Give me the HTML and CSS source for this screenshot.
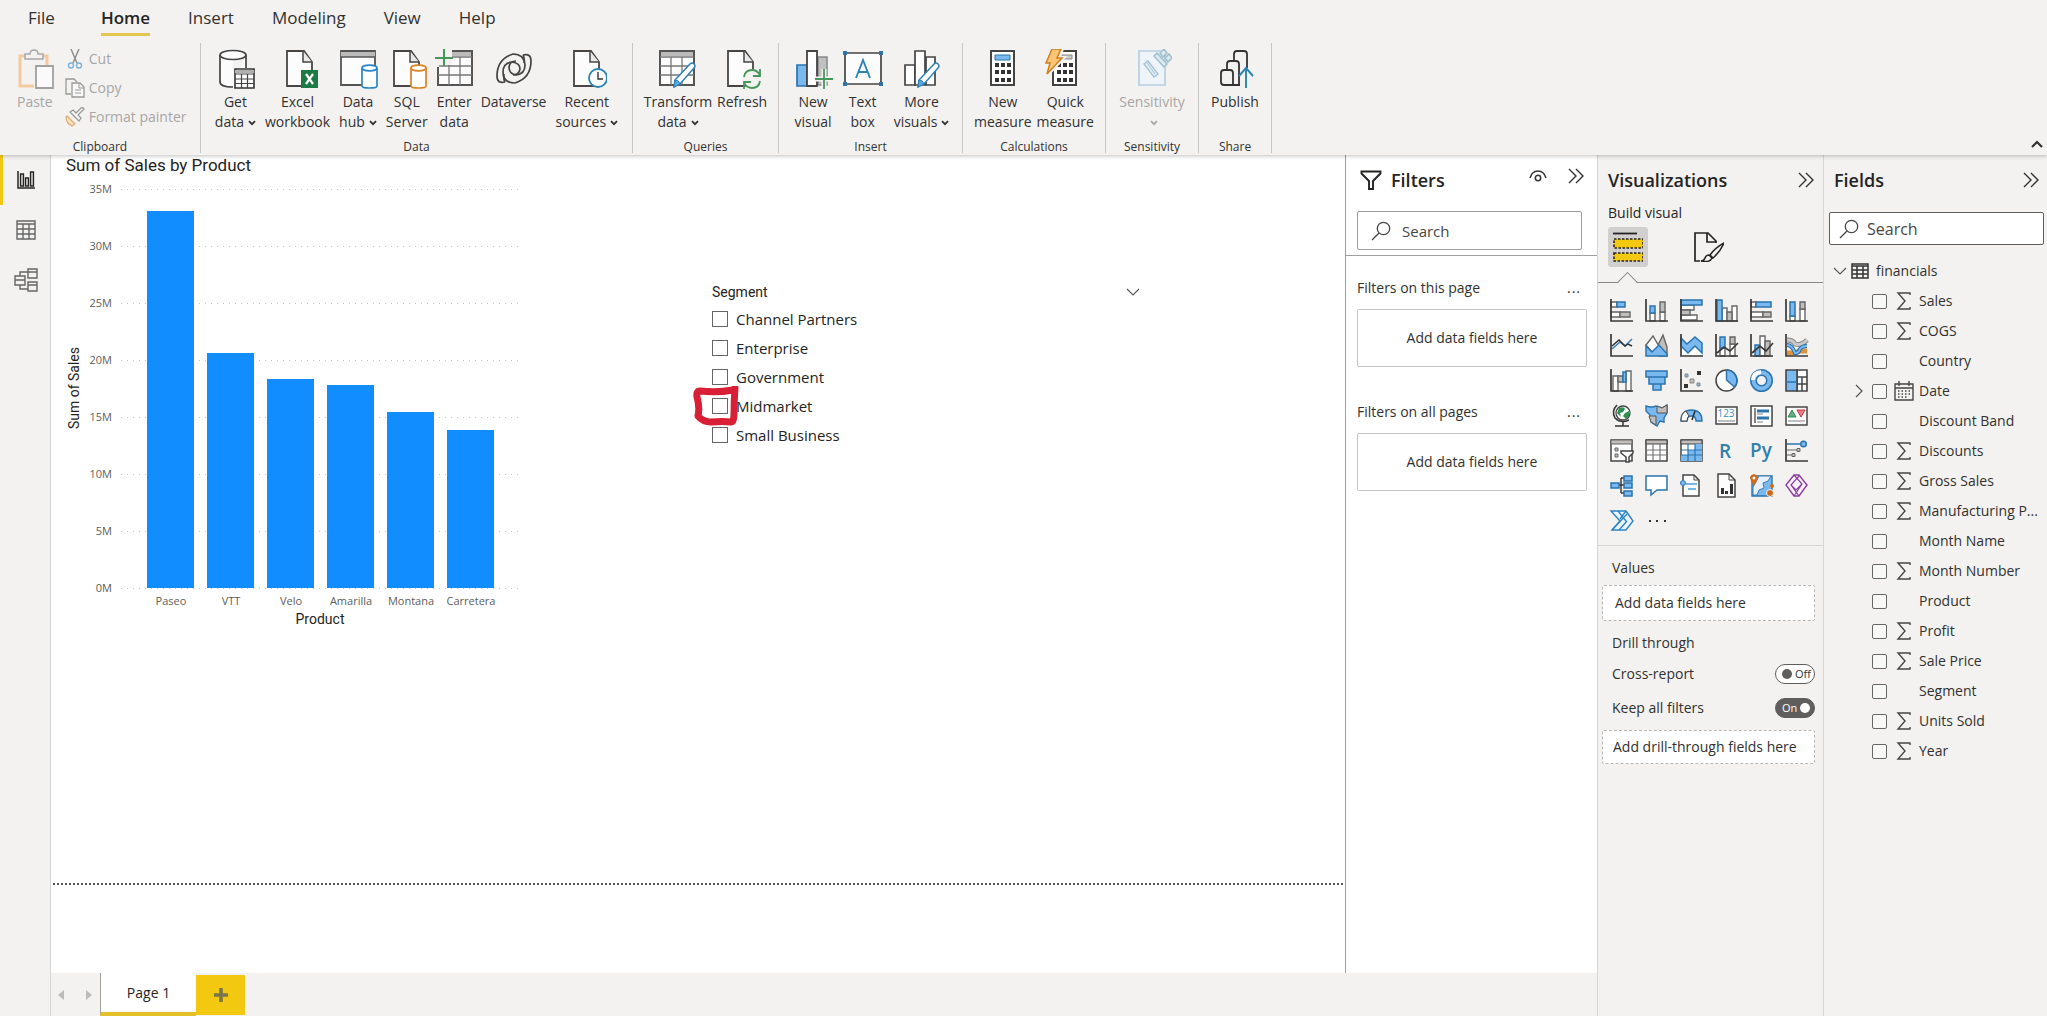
FILE: index.html
```html
<!DOCTYPE html>
<html lang="en">
<head>
    <meta charset="UTF-8">
    <meta name="viewport" content="width=device-width, initial-scale=1">
    <title>Report</title>
    <link rel="stylesheet" href="styles.css">
</head>
<body>
<svg class="defs" aria-hidden="true">
    <symbol id="i-caret" viewBox="0 0 8 6"><path d="M1 1.2l3 3 3-3" fill="none" stroke="currentColor" stroke-width="1.8"/></symbol>
    <symbol id="i-page" viewBox="0 0 28 38"><path d="M1 1h17l8 11v24H1z" fill="#fcfcfc" stroke="#484644" stroke-width="1.8"/><path d="M17 1v11h9" fill="#e8e8e8" stroke="#484644" stroke-width="1.5"/></symbol>
    <symbol id="i-dbl" viewBox="0 0 16 16"><path d="M1 1l7 7-7 7M8 1l7 7-7 7" fill="none" stroke="#333" stroke-width="1.4"/></symbol>
    <symbol id="i-search" viewBox="0 0 20 20"><circle cx="12.5" cy="7.5" r="6.2" fill="none" stroke="#444" stroke-width="1.3"/><path d="M8 12l-7 7" fill="none" stroke="#444" stroke-width="1.3"/></symbol>
    <symbol id="i-sum" viewBox="0 0 14 18"><path d="M13 3V1H1l7 8-7 8h12v-2" fill="none" stroke="#484644" stroke-width="1.4"/></symbol>
    <symbol id="i-down" viewBox="0 0 14 8"><path d="M1 1l6 6 6-6" fill="none" stroke="#555" stroke-width="1.1"/></symbol>
    <symbol id="i-pencil" viewBox="0 0 24 28"><path d="M2 26l1-7L18 3q2-2 4 0t0 4L8 23z" fill="#fff" stroke="#2b7fb3" stroke-width="1.5"/><path d="M2 26l1-7q4 0 5 4z" fill="#5aa9e6" stroke="#2b7fb3"/></symbol>
</svg>

<header class="ribbon">
    <nav class="tabs">
        <button class="tab tab-file">File</button>
        <button class="tab tab-active">Home</button>
        <button class="tab">Insert</button>
        <button class="tab">Modeling</button>
        <button class="tab">View</button>
        <button class="tab">Help</button>
    </nav>
    <div class="groups">
        <section class="group group-clipboard">
            <div class="tools">
                <button class="tool" disabled>
                    <svg class="tool-icon" viewBox="0 0 40 40"><path d="M19 37H5V7h27v9" fill="none" stroke="#f3c9a0" stroke-width="3"/><path d="M10 10V5h5q0-4 4-4t4 4h5v5z" fill="#f3f2f1" stroke="#a8a8a8" stroke-width="1.5"/><path d="M21 17h17v22H21z" fill="#fafafa" stroke="#a0a0a0" stroke-width="1.8"/></svg>
                    <span>Paste</span>
                </button>
                <div class="mini-tools">
                    <button class="mini" disabled><svg class="mini-icon" viewBox="0 0 20 20"><path d="M6 0l6 14M14 0L8 14" fill="none" stroke="#8a8a8a" stroke-width="1.4"/><circle cx="6" cy="16.5" r="2.5" fill="none" stroke="#7fb2d8" stroke-width="1.4"/><circle cx="14" cy="16.5" r="2.5" fill="none" stroke="#7fb2d8" stroke-width="1.4"/></svg>Cut</button>
                    <button class="mini" disabled><svg class="mini-icon" viewBox="0 0 20 20"><path d="M6 16H1V1h8l3 3" fill="none" stroke="#999" stroke-width="1.3"/><path d="M7 5h8l4 4v10H7z" fill="#f8f8f8" stroke="#999" stroke-width="1.3"/><path d="M14 5v5h5M10 12h6M10 15h6" fill="none" stroke="#999"/></svg>Copy</button>
                    <button class="mini" disabled><svg class="mini-icon" viewBox="0 0 20 20"><path d="M2 9l8 8-3 2q-6-3-6-9z" fill="#fbe3c8" stroke="#e2a870" stroke-width="1.2"/><path d="M5 5l9 9 2-3-3-3 6-6-2-2-6 6-3-3z" fill="#f8f8f8" stroke="#999" stroke-width="1.3"/></svg>Format painter</button>
                </div>
            </div>
            <div class="caption">Clipboard</div>
        </section>
        <section class="group group-data">
            <div class="tools">
                <button class="tool">
                    <svg class="tool-icon" viewBox="0 0 40 40"><path d="M5 6v28q0 4 13 4V6M31 6v16H18v16" fill="#fcfcfc"/><path d="M5 6v27q0 5 13 5M31 6v13" fill="none" stroke="#444" stroke-width="1.7"/><ellipse cx="18" cy="6" rx="13" ry="4.5" fill="#fcfcfc" stroke="#444" stroke-width="1.7"/><path d="M20 20h19v19H20z" fill="#fff" stroke="#333" stroke-width="1.6"/><path d="M20 21h19v3H20z" fill="#b0b0b0"/><path d="M20 25h19M20 30h19M20 34.5h19M26.5 25v14M32.5 25v14" stroke="#444" stroke-width="1.2"/></svg>
                    <span>Get<br>data<svg class="caret"><use href="#i-caret"/></svg></span>
                </button>
                <button class="tool">
                    <svg class="tool-icon" viewBox="0 0 40 40"><use href="#i-page" x="8" y="1" width="28" height="38"/><path d="M23 21h17v18H23z" fill="#1c7a45"/><path d="M28 25l7 10M35 25l-7 10" stroke="#fff" stroke-width="2.2"/></svg>
                    <span>Excel<br>workbook</span>
                </button>
                <button class="tool">
                    <svg class="tool-icon" viewBox="0 0 40 40"><path d="M3 2h34v34H3z" fill="#fcfcfc" stroke="#555" stroke-width="1.8"/><path d="M3 3h34v5H3z" fill="#bbb"/><path d="M3 8h34" stroke="#555" stroke-width="1.5"/><path d="M24 19v18q0 2 7.5 2t7.5-2V19" fill="#fff" stroke="#2b84c4" stroke-width="1.7"/><ellipse cx="31.5" cy="19" rx="7.5" ry="2.8" fill="#fff" stroke="#2b84c4" stroke-width="1.7"/></svg>
                    <span>Data<br>hub<svg class="caret"><use href="#i-caret"/></svg></span>
                </button>
                <button class="tool">
                    <svg class="tool-icon" viewBox="0 0 40 40"><use href="#i-page" x="6" y="1" width="28" height="38"/><path d="M24 19v18q0 2 7.5 2t7.5-2V19" fill="#fff" stroke="#d98425" stroke-width="1.7"/><ellipse cx="31.5" cy="19" rx="7.5" ry="2.8" fill="#fff" stroke="#d98425" stroke-width="1.7"/></svg>
                    <span>SQL<br>Server</span>
                </button>
                <button class="tool">
                    <svg class="tool-icon" viewBox="0 0 40 40"><path d="M4 2h34v34H4z" fill="#fcfcfc" stroke="#555" stroke-width="2"/><path d="M15 3h22v4H15z" fill="#bbb"/><path d="M4 17h34M4 26h34M15 8v28M26 8v28M14 8h24" stroke="#777" stroke-width="1.3"/><path d="M0 6h5v12H0zM3 0h15v16H3z" fill="#f3f2f1"/><path d="M10 0v17M1 9h18" stroke="#43985a" stroke-width="2"/></svg>
                    <span>Enter<br>data</span>
                </button>
                <button class="tool">
                    <svg class="tool-icon" viewBox="0 0 40 40"><g fill="none" stroke="#444" stroke-width="1.7"><path d="M11 33q-8 2-8-6 0-17 16-22 11 0 12 11 0 9-9 10-7-1-7-8 1-6 7-6"/><path d="M29 6q8-2 8 6 0 17-16 22-12 0-12-11 0-9 9-10 8 1 8 7-1 6-7 6"/><path d="M11 33q-2-4-1-8M29 6q2 4 1 8"/></g></svg>
                    <span>Dataverse</span>
                </button>
                <button class="tool">
                    <svg class="tool-icon" viewBox="0 0 40 40"><use href="#i-page" x="6" y="1" width="28" height="38"/><circle cx="31" cy="29" r="9" fill="#fff" stroke="#2b84b4" stroke-width="1.8"/><path d="M31 23v7h5" fill="none" stroke="#333" stroke-width="1.4"/></svg>
                    <span>Recent<br>sources<svg class="caret"><use href="#i-caret"/></svg></span>
                </button>
            </div>
            <div class="caption">Data</div>
        </section>
        <section class="group group-queries">
            <div class="tools">
                <button class="tool">
                    <svg class="tool-icon" viewBox="0 0 40 40"><path d="M2 2h34v34H2z" fill="#fcfcfc" stroke="#555" stroke-width="2"/><path d="M3 3h32v4H3z" fill="#bbb"/><path d="M2 8h34M2 17h34M2 26h34M13 8v28M24 8v28" stroke="#777" stroke-width="1.3"/><use href="#i-pencil" x="13" y="12" width="26" height="28"/></svg>
                    <span>Transform<br>data<svg class="caret"><use href="#i-caret"/></svg></span>
                </button>
                <button class="tool">
                    <svg class="tool-icon" viewBox="0 0 40 40"><use href="#i-page" x="5" y="1" width="28" height="38"/><circle cx="30" cy="30" r="10" fill="#f3f2f1"/><path d="M22 28q1-7 8-7 5 0 8 5M38 20v7h-7M38 32q-1 7-8 7-5 0-8-5M22 40v-7h7" fill="none" stroke="#43985a" stroke-width="1.8"/></svg>
                    <span>Refresh</span>
                </button>
            </div>
            <div class="caption">Queries</div>
        </section>
        <section class="group group-insert">
            <div class="tools">
                <button class="tool">
                    <svg class="tool-icon" viewBox="0 0 40 40"><path d="M25 8h9v28h-9z" fill="#c0c0c0" stroke="#888" stroke-width="1.5"/><path d="M4 16h10v21H4z" fill="#7ab8f0" stroke="#2b74ad" stroke-width="1.7"/><path d="M14 2h10v35H14z" fill="#fff" stroke="#444" stroke-width="1.8"/><path d="M31 20v20M22 30h18" stroke="#f3f2f1" stroke-width="5"/><path d="M31 20v20M22 30h18" stroke="#43985a" stroke-width="1.8"/></svg>
                    <span>New<br>visual</span>
                </button>
                <button class="tool">
                    <svg class="tool-icon" viewBox="0 0 40 40"><path d="M2 4h36v31H2z" fill="#fcfcfc" stroke="#444" stroke-width="1.7"/><path d="M0 2h4v4H0zM36 2h4v4h-4zM0 33h4v4H0zM36 33h4v4h-4z" fill="#2b74ad"/><path d="M13 29l7-18 7 18M15 23h10" fill="none" stroke="#2b84b4" stroke-width="1.9"/></svg>
                    <span>Text<br>box</span>
                </button>
                <button class="tool">
                    <svg class="tool-icon" viewBox="0 0 40 40"><path d="M24 8h9v28h-9zM3 16h10v20H3z" fill="#fff" stroke="#444" stroke-width="1.7"/><path d="M13 2h10v34H13z" fill="#fff" stroke="#444" stroke-width="1.7"/><use href="#i-pencil" x="12" y="12" width="28" height="28"/></svg>
                    <span>More<br>visuals<svg class="caret"><use href="#i-caret"/></svg></span>
                </button>
            </div>
            <div class="caption">Insert</div>
        </section>
        <section class="group group-calc">
            <div class="tools">
                <button class="tool">
                    <svg class="tool-icon" viewBox="0 0 40 40"><path d="M8 2h23v34H8z" fill="#fff" stroke="#444" stroke-width="2"/><path d="M12 6h15v5H12z" fill="#7ab8f0" stroke="#2b74ad"/><path d="M12 16h16M12 23h16M12 31h16" stroke="#333" stroke-width="4" stroke-dasharray="4 2"/></svg>
                    <span>New<br>measure</span>
                </button>
                <button class="tool">
                    <svg class="tool-icon" viewBox="0 0 40 40"><path d="M8 2h23v34H8z" fill="#fff" stroke="#444" stroke-width="2"/><path d="M17 6h10v4H17z" fill="#ccc" stroke="#888"/><path d="M12 16h16M12 23h16M12 31h16" stroke="#333" stroke-width="4" stroke-dasharray="4 2"/><path d="M7 0h10l-4 9h5L2 26l3-12H0z" fill="#fbb65a" stroke="#f3f2f1" stroke-width="4"/><path d="M7 0h9l-4 9h5L2 25l3-11H1z" fill="#fbc577" stroke="#d17f1c" stroke-width="1.5"/></svg>
                    <span>Quick<br>measure</span>
                </button>
            </div>
            <div class="caption">Calculations</div>
        </section>
        <section class="group group-sens">
            <div class="tools">
                <button class="tool" disabled>
                    <svg class="tool-icon" viewBox="0 0 40 40"><path d="M7 2h26v34H7z" fill="#eef4fa" stroke="#b5cfe4" stroke-width="1.7"/><path d="M12 15l4-3 10 13-4 3z" fill="#e3edf5" stroke="#a6c3d6" stroke-width="1.4"/><path d="M15 14l8 11" stroke="#a6c3d6"/><path d="M22 7l3-3 10 11-3 3zM28 4l4-4 3 4-4 4zM33 9l4-4 3 4-4 4z" fill="#dcebf2" stroke="#9fbfcc" stroke-width="1.5"/></svg>
                    <span>Sensitivity<br><svg class="caret"><use href="#i-caret"/></svg></span>
                </button>
            </div>
            <div class="caption">Sensitivity</div>
        </section>
        <section class="group group-share">
            <div class="tools">
                <button class="tool">
                    <svg class="tool-icon" viewBox="0 0 40 40"><path d="M19 12V5q0-3 3-3h7q3 0 3 3v14M12 21v-6q0-3 3-3h6q3 0 3 3v21M12 36H9q-3 0-3-3V24q0-3 3-3h6q3 0 3 3v12H9M18 36h7" fill="none" stroke="#333" stroke-width="1.8"/><path d="M31 39V20M24 27l7-8 7 8" fill="none" stroke="#2b84b4" stroke-width="1.9"/></svg>
                    <span>Publish</span>
                </button>
            </div>
            <div class="caption">Share</div>
        </section>
        <button class="collapse" aria-label="Collapse ribbon"><svg viewBox="0 0 12 8"><path d="M1 7l5-5 5 5" fill="none" stroke="#333" stroke-width="2.2"/></svg></button>
    </div>
</header>

<main class="workspace">
    <nav class="rail">
        <button class="rail-btn rail-active" aria-label="Report"><svg viewBox="0 0 20 20"><path d="M2 1v17h17" fill="none" stroke="#252423" stroke-width="1.5"/><path d="M4.5 4h3v12h-3zM9.5 8h3v8h-3zM14.5 2h3v14h-3z" fill="#ccc" stroke="#252423" stroke-width="1.3"/></svg></button>
        <button class="rail-btn" aria-label="Data"><svg viewBox="0 0 20 20"><path d="M1 1h18v18H1zM1 4h18M1 9h18M1 14h18M7 4v15M13 4v15" fill="none" stroke="#666" stroke-width="1.4"/></svg></button>
        <button class="rail-btn" aria-label="Model"><svg class="rail-model" viewBox="0 0 24 24"><path d="M1 8h10v9H1zM1 12h10M14 1h9v9h-9zM14 4h9M14 14h9v9h-9zM14 17h9M6 8V4h8M6 17v4h8" fill="none" stroke="#666" stroke-width="1.4"/></svg></button>
    </nav>

    <div class="report">
        <div class="canvas">
            <section class="chart">
                <h2 class="chart-title">Sum of Sales by Product</h2>
                <div class="y-title"><span>Sum of Sales</span></div>
                <div class="y-labels">
                    <span>35M</span><span>30M</span><span>25M</span><span>20M</span><span>15M</span><span>10M</span><span>5M</span><span>0M</span>
                </div>
                <div class="plot">
                    <div class="lines"><i></i><i></i><i></i><i></i><i></i><i></i><i></i><i></i></div>
                    <div class="bars">
                        <div class="bar" style="height: 94.5%"></div>
                        <div class="bar" style="height: 58.8%"></div>
                        <div class="bar" style="height: 52.3%"></div>
                        <div class="bar" style="height: 50.9%"></div>
                        <div class="bar" style="height: 44.1%"></div>
                        <div class="bar" style="height: 39.6%"></div>
                    </div>
                </div>
                <div class="x-labels">
                    <span>Paseo</span><span>VTT</span><span>Velo</span><span>Amarilla</span><span>Montana</span><span>Carretera</span>
                </div>
                <div class="x-title">Product</div>
            </section>

            <section class="slicer">
                <div class="slicer-head">
                    <h3>Segment</h3>
                    <button class="icon-btn" aria-label="Slicer type"><svg class="down"><use href="#i-down"/></svg></button>
                </div>
                <label class="option"><input type="checkbox">Channel Partners</label>
                <label class="option"><input type="checkbox">Enterprise</label>
                <label class="option"><input type="checkbox">Government</label>
                <label class="option"><input type="checkbox">Midmarket
                    <svg class="mark" viewBox="0 0 46 40"><path d="M40 4q-16 3-33 1-4 0-3 6 3 10 1 19 5 6 13 6 12-1 20 0 3 0 3-8 0-12 1-26" fill="none" stroke="#d81f35" stroke-width="7" stroke-linecap="round" stroke-linejoin="round"/></svg>
                </label>
                <label class="option"><input type="checkbox">Small Business</label>
            </section>
        </div>
        <div class="canvas-rest"></div>
    </div>

    <aside class="filters">
        <div class="pane-head">
            <svg class="funnel" viewBox="0 0 22 20"><path d="M1.500 1.500h19v2L13 11v8H9v-8L1.500 3.500z" fill="none" stroke="#252423" stroke-width="1.9"/></svg>
            <h2>Filters</h2>
            <button class="icon-btn eye" aria-label="Show filters"><svg viewBox="0 0 18 12"><path d="M1 8q2-7 8-7t8 7" fill="none" stroke="#333" stroke-width="1.5"/><circle cx="9" cy="8" r="2.7" fill="none" stroke="#333" stroke-width="1.5"/></svg></button>
            <button class="icon-btn dbl" aria-label="Collapse filters"><svg><use href="#i-dbl"/></svg></button>
        </div>
        <div class="filter-search">
            <label class="search"><svg><use href="#i-search"/></svg><input type="text" placeholder="Search" aria-label="Search filters"></label>
        </div>
        <section class="filter-block">
            <div class="filter-name">Filters on this page<button class="icon-btn dots" aria-label="More">...</button></div>
            <div class="drop-box">Add data fields here</div>
        </section>
        <section class="filter-block">
            <div class="filter-name">Filters on all pages<button class="icon-btn dots" aria-label="More">...</button></div>
            <div class="drop-box">Add data fields here</div>
        </section>
    </aside>

    <footer class="pages">
        <button class="arrow" aria-label="Previous page"><svg viewBox="0 0 6 10"><path d="M6 0v10L0 5z" fill="#bbb"/></svg></button>
        <button class="arrow" aria-label="Next page"><svg viewBox="0 0 6 10"><path d="M0 0v10l6-5z" fill="#bbb"/></svg></button>
        <button class="page-tab">Page 1</button>
        <button class="add-page" aria-label="New page"><svg viewBox="0 0 14 14"><path d="M7 0v14M0 7h14" stroke="#7a7548" stroke-width="3.6"/></svg></button>
    </footer>

    <aside class="visuals">
        <div class="pane-head">
            <h2>Visualizations</h2>
            <button class="icon-btn dbl" aria-label="Collapse visualizations"><svg><use href="#i-dbl"/></svg></button>
        </div>
        <h3 class="build">Build visual</h3>
        <div class="modes">
            <button class="mode mode-active" aria-label="Build visual"><svg viewBox="0 0 30 30"><path d="M0 1.500h24" stroke="#252423" stroke-width="1.8"/><path d="M1 7h29v9H1zM1 21h29v8H1z" fill="#f2c811" stroke="#252423" stroke-width="1.6" stroke-dasharray="2.5 1.5"/></svg></button>
            <button class="mode" aria-label="Format visual"><svg viewBox="0 0 30 30"><path d="M6 29H1V1h13l8 8v2M13 1v9h9" fill="none" stroke="#252423" stroke-width="1.7"/><path d="M30 11q-9 5-14 12l3 3q7-6 11-15zM15 23q-3 0-4 3-1 3-4 3 9 2 11-3z" fill="#f3f2f1" stroke="#252423" stroke-width="1.5"/></svg></button>
        </div>
        <div class="gallery">
            <button aria-label="Stacked bar chart"><svg viewBox="0 0 23 23"><g class="ol"><path class="w" d="M1 3h6v5H1zM1 13h9v5H1z"/><path class="b" d="M7 3h8v5H7z"/><path class="g" d="M10 13h10v5H10z"/></g><path class="ax" d="M1 0v22h22"/></svg></button>
            <button aria-label="Stacked column chart"><svg viewBox="0 0 23 23"><g class="ol"><path class="w" d="M5 14h5v8H5zM15 13h5v9h-5z"/><path class="b" d="M5 7h5v7H5z"/><path class="g" d="M15 3h5v10h-5z"/></g><path class="ax" d="M1 0v22h22"/></svg></button>
            <button aria-label="Clustered bar chart"><svg viewBox="0 0 23 23"><g class="ol"><path class="w" d="M1 6h13v5H1zM1 16h16v5H1z"/><path class="g" d="M1 11h9v5H1z"/><path class="b" d="M1 1h21v5H1z"/></g><path class="ax" d="M1 0v22h22"/></svg></button>
            <button aria-label="Clustered column chart"><svg viewBox="0 0 23 23"><g class="ol"><path class="w" d="M7 9h5v13H7zM17 7h5v15h-5z"/><path class="g" d="M12 13h5v9h-5z"/><path class="b" d="M2 1h5v21H2z"/></g><path class="ax" d="M1 0v22h22"/></svg></button>
            <button aria-label="100% stacked bar chart"><svg viewBox="0 0 23 23"><g class="ol"><path class="w" d="M1 3h5v5H1zM1 13h12v5H1z"/><path class="b" d="M6 3h15v5H6z"/><path class="g" d="M13 13h8v5h-8z"/></g><path class="ax" d="M1 0v22h22"/></svg></button>
            <button aria-label="100% stacked column chart"><svg viewBox="0 0 23 23"><g class="ol"><path class="w" d="M5 17h5v5H5zM15 10h5v12h-5z"/><path class="b" d="M5 3h5v14H5z"/><path class="g" d="M15 3h5v7h-5z"/></g><path class="ax" d="M1 0v22h22"/></svg></button>

            <button aria-label="Line chart"><svg viewBox="0 0 23 23"><path d="M2 15l8-7 5 4 7-7" fill="none" stroke="#3a7fb5" stroke-width="1.5"/><path d="M2 12l7-6 6 6 3-2 4 2" fill="none" stroke="#333" stroke-width="1.5"/><path class="ax" d="M1 0v22h22"/></svg></button>
            <button aria-label="Area chart"><svg viewBox="0 0 23 23"><g class="ol"><path class="g" d="M12 13l6-12 4 12v9h-8z"/><path class="w" d="M1 11L8 2l7 12-8 4z"/><path class="b" d="M1 12l6 6 7-7 8 9v2H1z"/></g></svg></button>
            <button aria-label="Stacked area chart"><svg viewBox="0 0 23 23"><path class="w" d="M2 12l6 6 7-7 7 7v3H2z"/><path class="b" d="M1 4l6 6 8-7 7 6v10l-7-7-7 7-7-7z" stroke="#2b74ad" stroke-width="1.5"/><path class="ax" d="M1 0v22h22"/></svg></button>
            <button aria-label="Line and stacked column chart"><svg viewBox="0 0 23 23"><g class="ol"><path class="w" d="M5 14h5v8H5zM15 10h5v12h-5z"/><path class="b" d="M5 3h5v11H5z"/><path class="g" d="M15 3h5v7h-5z"/></g><path class="ax" d="M1 0v22h22M2 19l7-6 6 4 8-8"/></svg></button>
            <button aria-label="Line and clustered column chart"><svg viewBox="0 0 23 23"><g class="ol"><path class="b" d="M5 11h5v11H5z"/><path class="w" d="M10 2h5v20h-5z"/><path class="g" d="M15 7h5v15h-5z"/></g><path class="ax" d="M1 0v22h22M2 19l8-7 6 5 7-8"/></svg></button>
            <button aria-label="Ribbon chart"><svg viewBox="0 0 23 23"><path d="M2 19h8l4-2h8" fill="none" stroke="#e2903a" stroke-width="5"/><path d="M2 6q6 0 8 4 6 2 12-4" fill="none" stroke="#888" stroke-width="5"/><path d="M2 6q6 0 8 4 6 2 12-4" fill="none" stroke="#c8c8c8" stroke-width="3"/><path d="M2 11q5 0 8 8 4 0 5-4 2-3 7-3" fill="none" stroke="#2b74ad" stroke-width="4"/><path d="M2 11q5 0 8 8 4 0 5-4 2-3 7-3" fill="none" stroke="#7ab8f0" stroke-width="1.8"/><path class="ax" d="M1 0v22h22"/></svg></button>

            <button aria-label="Waterfall chart"><svg viewBox="0 0 23 23"><g class="ol"><path class="w" d="M3 7h5v15H3zM16 2h5v20h-5z"/><path class="g" d="M8 7h5v6H8z"/><path class="b" d="M13 3h3v10h-3z"/></g><path class="ax" d="M1 0v22h22"/></svg></button>
            <button aria-label="Funnel"><svg viewBox="0 0 23 23"><g class="bl"><path d="M1 2h21v6H1zM4 8h16v7H4zM8 15h8v6H8z"/></g></svg></button>
            <button aria-label="Scatter chart"><svg viewBox="0 0 23 23"><path d="M17 2h4v4h-4zM4 15h4v4H4z" fill="#333"/><path class="g" d="M10 10h4v4h-4z" stroke="#888"/><path class="b" d="M5 5h3v3H5zM17 14h3v3h-3z" stroke="#888"/><path class="ax" d="M1 0v22h22"/></svg></button>
            <button aria-label="Pie chart"><svg viewBox="0 0 23 23"><circle class="w" cx="11.5" cy="11.5" r="10.5" stroke="#444" stroke-width="1.5"/><path class="b" d="M11.500 1a10.500 10.500 0 0 1 8 17l-8-7z" stroke="#2b74ad" stroke-width="1.5"/></svg></button>
            <button aria-label="Donut chart"><svg viewBox="0 0 23 23"><circle cx="11.5" cy="11.5" r="8" fill="none" stroke="#2b74ad" stroke-width="7"/><circle cx="11.5" cy="11.5" r="8" fill="none" stroke="#7ab8f0" stroke-width="4"/><path d="M3 11q0-7 8-8" fill="none" stroke="#fff" stroke-width="4"/></svg></button>
            <button aria-label="Treemap"><svg viewBox="0 0 23 23"><path class="w" d="M12 1h10v21H12z" stroke="#444" stroke-width="1.6"/><path d="M12 8h10M17 8v14M17 15h5M12 15h5" stroke="#444" stroke-width="1.5"/><path class="b" d="M1 1h11v21H1z" stroke="#444" stroke-width="1.6"/><path d="M1 13h11" stroke="#2b74ad" stroke-width="1.5"/></svg></button>

            <button aria-label="Map"><svg viewBox="0 0 23 23"><circle class="w" cx="13" cy="9" r="7" stroke="#444" stroke-width="1.3"/><path d="M9 4q5-2 6 1l-2 3-3 1 1 4-4-4zM15 9l4-2v5l-3 3-3-3z" fill="#2f8f4e"/><path d="M7 1q-6 6-2 13 6 6 14 2M13 18v4M5 22h14" fill="none" stroke="#333" stroke-width="1.5"/></svg></button>
            <button aria-label="Filled map"><svg viewBox="0 0 23 23"><path class="b" d="M1 2q6 2 10 0l6 2 5-3v8l-3 5v4l-4-1-3 5-6-4-1-7-4-4z" stroke="#2b74ad" stroke-width="1.4"/><path class="g" d="M12 2l5 2 5-3v8h-10zM4 12h7v9l-5-3z" stroke="#555"/></svg></button>
            <button aria-label="Gauge"><svg viewBox="0 0 23 23"><path class="b" d="M1 17q0-11 10.500-11T22 17h-6q0-5-4.500-5T7 17z" stroke="#2b74ad" stroke-width="1.4"/><path class="w" d="M1 17q0-8 5-10l3 5q-2 1-2 5z" stroke="#444"/><path d="M12 16l3-9" stroke="#333" stroke-width="1.6"/></svg></button>
            <button aria-label="Card"><svg viewBox="0 0 23 23"><path class="w" d="M1 3h21v17H1z" stroke="#444" stroke-width="1.5"/><text x="11" y="13" class="card-num">123</text><path d="M3 17h17" stroke="#aaa" stroke-width="1.5"/></svg></button>
            <button aria-label="Multi-row card"><svg viewBox="0 0 23 23"><path class="w" d="M1 2h21v20H1z" stroke="#444" stroke-width="1.5"/><path d="M5 4v15" stroke="#444" stroke-width="1.3"/><path d="M7 7h12M7 14h12" stroke="#2b74ad" stroke-width="3"/><path d="M7 10h6M7 18h6" stroke="#aaa" stroke-width="1.4"/></svg></button>
            <button aria-label="KPI"><svg viewBox="0 0 23 23"><path class="w" d="M1 3h21v18H1z" stroke="#444" stroke-width="1.5"/><path d="M3 13l4-7 4 7z" fill="#6aa886" stroke="#2f8f4e"/><path d="M12 6h8l-4 7z" fill="#e8808a" stroke="#c8303c"/><path d="M3 17h17" stroke="#aaa" stroke-width="1.5"/></svg></button>

            <button aria-label="Slicer"><svg viewBox="0 0 23 23"><path class="w" d="M1 1h21v21H1z" stroke="#444" stroke-width="1.5"/><path class="g" d="M1 1h21v4H1zM5 9h3v3H5zM5 15h3v3H5z" stroke="#666"/><path d="M11 12h12v2l-4 4v5h-3v-5l-5-4z" fill="#fff" stroke="#444" stroke-width="1.5"/></svg></button>
            <button aria-label="Table"><svg viewBox="0 0 23 23"><path class="w" d="M1 1h21v21H1z" stroke="#444" stroke-width="1.5"/><path class="g" d="M1 1h21v4H1z" stroke="#444"/><path d="M1 11h21M1 16h21M8 5v17M15 5v17" stroke="#777" stroke-width="1.2"/></svg></button>
            <button aria-label="Matrix"><svg viewBox="0 0 23 23"><path class="w" d="M1 1h21v21H1z" stroke="#444" stroke-width="1.5"/><path class="g" d="M1 1h21v4H1z" stroke="#444"/><path class="b" d="M8 11h7V5h7v17H1v-6h7z"/><path d="M1 11h21M1 16h21M8 5v17M15 5v17" stroke="#2b74ad" stroke-width="1.2"/></svg></button>
            <button aria-label="R script visual"><svg viewBox="0 0 23 23"><text x="10" y="19" class="letter">R</text></svg></button>
            <button aria-label="Python visual"><svg viewBox="0 0 23 23"><text x="11" y="18" class="letter">Py</text></svg></button>
            <button aria-label="Key influencers"><svg viewBox="0 0 23 23"><path d="M2 5h14" stroke="#2b74ad" stroke-width="1.5"/><circle class="b" cx="18.5" cy="5" r="2.8" stroke="#2b74ad" stroke-width="1.4"/><path class="g" d="M2 11h10M2 16h5M12 9.500h3v3h-3zM7 14.500h3v3H7z" stroke="#666"/><path class="ax" d="M1 0v22h22"/></svg></button>

            <button aria-label="Decomposition tree"><svg viewBox="0 0 23 23"><path d="M8 11h6M11 4v15M11 4h4M11 19h4" fill="none" stroke="#333" stroke-width="1.4"/><g class="bl"><path d="M1 9h8v5H1zM14 2h8v5h-8zM14 9h8v5h-8zM14 17h8v5h-8z"/></g></svg></button>
            <button aria-label="Q&amp;A"><svg viewBox="0 0 23 23"><path d="M1 2h21v14H12l-6 5v-5H1z" fill="#fff" stroke="#2b74ad" stroke-width="1.5"/></svg></button>
            <button aria-label="Narrative"><svg viewBox="0 0 23 23"><path d="M3 6V1h11l5 5v16H3V12" fill="#fcfcfc" stroke="#444" stroke-width="1.5"/><path d="M14 1v5h5" fill="none" stroke="#444"/><path d="M6 10h11M8 15h8" stroke="#4a9fe0" stroke-width="1.3"/><circle class="b" cx="3" cy="9" r="2.5" stroke="#2b74ad"/></svg></button>
            <button aria-label="Paginated report"><svg viewBox="0 0 23 23"><path d="M3 0h11l6 6v17H3z" fill="#fcfcfc" stroke="#444" stroke-width="1.5"/><path d="M14 0v6h6" fill="none" stroke="#444"/><path d="M6 14h3v6H6zM10 17h3v3h-3zM15 10h3v10h-3z" fill="#333"/></svg></button>
            <button aria-label="ArcGIS map"><svg viewBox="0 0 23 23"><path class="b" d="M2 2h20v20H2z" stroke="#2b74ad" stroke-width="1.4"/><path d="M9 2h12l-3 5-5 2 1 5-5 2-2 5H3v-8z" fill="#e6f1fa" stroke="#3a7fb5"/><path d="M0 3q4-6 8 0 0 3-4 9-4-6-4-9z" fill="#cc6a1c"/><circle cx="4" cy="4" r="1.5" fill="#fff"/><circle cx="20" cy="19" r="3.5" fill="#cc6a1c" stroke="#f3f2f1"/><circle cx="22" cy="12" r="2" fill="#cc6a1c"/></svg></button>
            <button aria-label="Power Apps"><svg viewBox="0 0 23 23"><path d="M9 1h5l8 10-8 11H9L1 11z" fill="#faf3fb" stroke="#8c3d9c" stroke-width="1.4"/><path d="M9 1l8 9-6 6-5-5 8-9M17 10l-8 12M6 11l8 11" fill="none" stroke="#8c3d9c" stroke-width="1.2"/></svg></button>

            <button aria-label="Power Automate"><svg viewBox="0 0 23 23"><path d="M1 2h15l7 10-7 9H2l8-9z" fill="#eaf5fd" stroke="#2b84c4" stroke-width="1.4"/><path d="M8 2l8 10M16 2l-6 8M2 21L17 5M9 21l8-9" fill="none" stroke="#2b84c4" stroke-width="1.3"/></svg></button>
            <button aria-label="Get more visuals"><svg viewBox="0 0 23 23"><path d="M4 11h2v2H4zM11 11h2v2h-2zM19 11h2v2h-2z" fill="#333"/></svg></button>
        </div>
        <div class="wells">
            <h4 class="well-name">Values</h4>
            <div class="well well-values">Add data fields here</div>
            <h4 class="well-name drill">Drill through</h4>
            <div class="switch-row">
                <label for="cross">Cross-report</label>
                <span class="switch"><input type="checkbox" role="switch" id="cross"><span>Off</span></span>
            </div>
            <div class="switch-row">
                <label for="keep">Keep all filters</label>
                <span class="switch switch-on"><span>On</span><input type="checkbox" role="switch" id="keep" checked></span>
            </div>
            <div class="well">Add drill-through fields here</div>
        </div>
    </aside>

    <aside class="fields">
        <div class="pane-head">
            <h2>Fields</h2>
            <button class="icon-btn dbl" aria-label="Collapse fields"><svg><use href="#i-dbl"/></svg></button>
        </div>
        <label class="search search-fields"><svg><use href="#i-search"/></svg><input type="text" placeholder="Search" aria-label="Search fields"></label>
        <div class="table-name">
            <svg class="down"><use href="#i-down"/></svg>
            <svg class="table-icon" viewBox="0 0 18 16"><path d="M1 1h16v14H1zM1 3h16M1 7h16M1 11h16M6 3v12M12 3v12" fill="none" stroke="#333" stroke-width="1.5"/></svg>
            financials
        </div>
        <ul class="field-list">
            <li><label><input type="checkbox"><svg class="sum"><use href="#i-sum"/></svg><span>Sales</span></label></li>
            <li><label><input type="checkbox"><svg class="sum"><use href="#i-sum"/></svg><span>COGS</span></label></li>
            <li><label><input type="checkbox"><i class="sum"></i><span>Country</span></label></li>
            <li><button class="expand" aria-label="Expand Date"><svg viewBox="0 0 8 14"><path d="M1 1l6 6-6 6" fill="none" stroke="#555" stroke-width="1.2"/></svg></button><label><input type="checkbox"><svg class="sum calendar" viewBox="0 0 20 20"><path d="M1 3h18v16H1zM1 7h18M5 0v5M15 0v5" fill="none" stroke="#484644" stroke-width="1.4"/><path d="M4 10h12M4 13h12M4 16h9" stroke="#484644" stroke-width="1.5" stroke-dasharray="1.5 2"/></svg><span>Date</span></label></li>
            <li><label><input type="checkbox"><i class="sum"></i><span>Discount Band</span></label></li>
            <li><label><input type="checkbox"><svg class="sum"><use href="#i-sum"/></svg><span>Discounts</span></label></li>
            <li><label><input type="checkbox"><svg class="sum"><use href="#i-sum"/></svg><span>Gross Sales</span></label></li>
            <li><label><input type="checkbox"><svg class="sum"><use href="#i-sum"/></svg><span>Manufacturing P...</span></label></li>
            <li><label><input type="checkbox"><i class="sum"></i><span>Month Name</span></label></li>
            <li><label><input type="checkbox"><svg class="sum"><use href="#i-sum"/></svg><span>Month Number</span></label></li>
            <li><label><input type="checkbox"><i class="sum"></i><span>Product</span></label></li>
            <li><label><input type="checkbox"><svg class="sum"><use href="#i-sum"/></svg><span>Profit</span></label></li>
            <li><label><input type="checkbox"><svg class="sum"><use href="#i-sum"/></svg><span>Sale Price</span></label></li>
            <li><label><input type="checkbox"><i class="sum"></i><span>Segment</span></label></li>
            <li><label><input type="checkbox"><svg class="sum"><use href="#i-sum"/></svg><span>Units Sold</span></label></li>
            <li><label><input type="checkbox"><svg class="sum"><use href="#i-sum"/></svg><span>Year</span></label></li>
        </ul>
    </aside>
</main>
</body>
</html>
```
FILE: styles.css
```css
* {
    margin: 0;
    padding: 0;
    box-sizing: border-box;
}

html,
body {
    height: 100%;
}

body {
    display: flex;
    flex-direction: column;
    overflow: hidden;
    background: #f3f2f1;
    color: #323130;
    font: 14px/20px "Open Sans", "Noto Sans", sans-serif;
}

button,
input {
    border: 0;
    background: none;
    color: inherit;
    font: inherit;
}

svg {
    display: block;
    flex: none;
}

h2,
h3,
h4 {
    font-size: 14px;
    font-weight: 400;
}

ul {
    list-style: none;
}

.defs {
    position: absolute;
    width: 0;
    height: 0;
}

/* ribbon */

.ribbon {
    flex: none;
    position: relative;
    padding-bottom: 2px;
    box-shadow: 0 1px 4px rgba(0, 0, 0, .25);
}

.tabs {
    display: flex;
    gap: 38px;
    height: 43px;
    padding-left: 28px;
}

.tab {
    height: 36px;
    padding-top: 3px;
    border-bottom: 3px solid transparent;
    font-size: 17px;
    line-height: 30px;
}

.tab-file {
    margin-right: 8px;
}

.tab-active {
    border-color: #e3c64d;
    color: #252423;
    font-weight: 600;
}

.groups {
    display: flex;
    height: 110px;
}

.group {
    display: flex;
    flex-direction: column;
    justify-content: space-between;
    border-right: 1px solid #c8c6c4;
}

.group-clipboard {
    width: 201px;
}

.group-data {
    width: 432px;
}

.group-queries {
    width: 146px;
}

.group-insert {
    width: 184px;
}

.group-calc {
    width: 143px;
}

.group-sens {
    width: 93px;
}

.group-share {
    width: 73px;
}

.tools {
    display: flex;
    justify-content: center;
    gap: 9px;
    padding-top: 6px;
}

.group-queries .tools,
.group-calc .tools {
    gap: 5px;
}

.group-insert .tools {
    gap: 14px;
    padding-left: 3px;
}

.group-clipboard .tools {
    justify-content: flex-start;
    gap: 12px;
    padding-left: 17px;
}

.tool {
    display: flex;
    flex-direction: column;
    align-items: center;
    gap: 3px;
    white-space: nowrap;
}

.tool-icon {
    width: 40px;
    height: 40px;
    margin: 0 -3px;
}

.tool:disabled,
.mini:disabled {
    color: #a8a6a4;
}

.caret {
    display: inline-block;
    width: 8px;
    height: 6px;
    margin-left: 4px;
    vertical-align: 1px;
}

.mini-tools {
    display: flex;
    flex-direction: column;
    gap: 9px;
}

.mini {
    display: flex;
    align-items: center;
    gap: 4px;
}

.mini-icon {
    width: 20px;
    height: 20px;
}

.caption {
    font-size: 12px;
    line-height: 12px;
    text-align: center;
}

.collapse {
    align-self: flex-end;
    margin-left: auto;
    padding: 5px 4px;
}

.collapse svg {
    width: 12px;
    height: 8px;
}

/* workspace */

.workspace {
    display: grid;
    flex: 1;
    grid-template-columns: 51px 1fr 252px 226px 224px;
    grid-template-rows: 1fr 43px;
    min-height: 0;
}

.rail {
    grid-row: 1 / 3;
    border-right: 1px solid #d8d6d4;
}

.rail-btn {
    display: flex;
    align-items: center;
    justify-content: center;
    width: 100%;
    height: 50px;
    padding-right: 2px;
    border-left: 3px solid transparent;
}

.rail-active {
    border-color: #f2c811;
}

.rail-btn svg {
    width: 20px;
    height: 20px;
}

.rail-btn .rail-model {
    width: 24px;
    height: 24px;
}

.report {
    display: flex;
    flex-direction: column;
    background: #fff;
}

.canvas {
    display: flex;
    flex: 1;
    align-items: flex-start;
    gap: 193px;
    padding-left: 15px;
    background: repeating-linear-gradient(90deg, #555 0 2px, transparent 2px 4px) 2px 100% / 100% 2px no-repeat;
}

.canvas-rest {
    height: 88px;
}

.chart {
    display: grid;
    grid-template-columns: 16px 30px 1fr;
    grid-template-rows: 27px 413px 12px 24px;
    width: 453px;
    color: #252423;
    font-family: Roboto, sans-serif;
}

.chart-title {
    grid-column: 1 / 4;
    font-size: 17px;
    line-height: 20px;
}

.y-title {
    display: flex;
    align-items: center;
    justify-content: center;
}

.y-title span {
    writing-mode: vertical-rl;
    line-height: 16px;
    transform: rotate(180deg);
}

.y-labels {
    display: flex;
    flex-direction: column;
    justify-content: space-between;
    color: #605e5c;
    font: 11px/14px "Open Sans", sans-serif;
    text-align: right;
}

.plot {
    display: grid;
    margin: 7px 0 7px 9px;
}

.lines,
.bars {
    grid-area: 1 / 1;
}

.lines {
    display: flex;
    flex-direction: column;
    justify-content: space-between;
    margin-bottom: -1px;
}

.lines i {
    height: 1px;
    background: repeating-linear-gradient(90deg, #c8c6c4 0 1px, transparent 1px 6px);
}

.bars,
.x-labels {
    display: grid;
    grid-template-columns: repeat(6, 1fr);
    padding: 0 18px 0 20px;
}

.bars {
    z-index: 1;
    align-items: end;
}

.bar {
    margin: 0 7px 0 6px;
    background: #118dff;
}

.x-labels {
    grid-column: 3;
    margin-left: 9px;
    color: #605e5c;
    font: 11px/12px "Open Sans", sans-serif;
    text-align: center;
}

.x-title {
    grid-column: 3;
    margin-left: 9px;
    line-height: 24px;
    text-align: center;
}

.slicer {
    width: 430px;
    margin-top: 127px;
    color: #252423;
}

.slicer-head {
    display: flex;
    align-items: center;
    justify-content: space-between;
    height: 20px;
    margin-bottom: 2px;
    padding-right: 2px;
}

.slicer-head h3 {
    font: 14px/20px Roboto, sans-serif;
}

.down {
    width: 14px;
    height: 8px;
}

.option {
    display: flex;
    align-items: center;
    gap: 8px;
    position: relative;
    height: 29px;
    font-size: 15px;
}

.option input,
.field-list input {
    width: 16px;
    height: 16px;
    border: 1px solid #666;
    background: #fff;
    appearance: none;
}

/* hand-drawn mark over the Midmarket tick box */
.mark {
    position: absolute;
    top: -5px;
    left: -19px;
    width: 46px;
    height: 40px;
}

/* panes */

.icon-btn {
    display: flex;
    align-items: center;
}

.pane-head {
    display: flex;
    align-items: center;
    height: 49px;
}

.pane-head h2 {
    color: #252423;
    font-size: 18px;
    font-weight: 600;
    line-height: 24px;
}

.dbl {
    margin-left: auto;
}

.dbl svg {
    width: 16px;
    height: 16px;
}

.search {
    display: flex;
    align-items: center;
    gap: 11px;
    height: 39px;
    padding-left: 13px;
    border: 1px solid #a19f9d;
    border-radius: 2px;
    background: #fff;
    font-size: 15px;
}

.search svg {
    width: 20px;
    height: 20px;
}

.search input {
    flex: 1;
    min-width: 0;
    outline: 0;
}

.search input::placeholder {
    color: #484644;
}

.filters {
    border-left: 1px solid #a19f9d;
    background: #fff;
}

.filters .pane-head {
    gap: 9px;
    padding: 0 13px 0 14px;
}

.funnel {
    width: 22px;
    height: 20px;
}

.eye {
    margin-left: auto;
    padding: 0 12px 8px 0;
}

.eye svg {
    width: 18px;
    height: 12px;
}

.filters .dbl {
    margin-left: 0;
    padding-bottom: 8px;
}

.filter-search {
    padding: 7px 15px 5px 11px;
    border-bottom: 1px solid #a19f9d;
}

.filter-block {
    padding: 22px 10px 13px 11px;
}

.filter-name {
    display: flex;
    justify-content: space-between;
    padding-right: 6px;
}

.dots {
    letter-spacing: 1px;
}

.drop-box {
    margin-top: 11px;
    padding: 18px 0;
    border: 1px solid #c8c6c4;
    border-radius: 2px;
    text-align: center;
}

.pages {
    display: flex;
    grid-area: 2 / 2 / 3 / 4;
}

.arrow {
    width: 24px;
    padding-left: 7px;
}

.arrow svg {
    width: 6px;
    height: 10px;
}

.arrow + .arrow {
    width: 25px;
    padding-left: 11px;
}

.page-tab {
    width: 96px;
    border-bottom: 4px solid #e3c02a;
    border-left: 1px solid #a19f9d;
    background: #fff;
    color: #252423;
}

.add-page {
    display: flex;
    align-items: center;
    justify-content: center;
    width: 49px;
    margin: 2px 0 1px;
    background: #f2c811;
}

.add-page svg {
    width: 14px;
    height: 14px;
}

.visuals {
    grid-area: 1 / 4 / 3 / 5;
    border-left: 1px solid #d8d6d4;
}

.visuals .pane-head {
    padding: 0 9px 0 10px;
}

.build {
    padding-left: 10px;
    color: #252423;
    font-weight: 500;
    line-height: 18px;
}

.modes {
    display: flex;
    gap: 41px;
    position: relative;
    padding: 5px 10px 15px;
    border-bottom: 1px solid #8a8886;
}

.modes::after {
    content: "";
    position: absolute;
    bottom: -8px;
    left: 22px;
    width: 14px;
    height: 14px;
    border: solid #8a8886;
    border-width: 1px 0 0 1px;
    background: linear-gradient(135deg, #f3f2f1 50%, transparent 50%);
    transform: rotate(45deg);
}

.mode {
    width: 40px;
    height: 40px;
    padding: 5px;
    border-radius: 3px;
}

.mode-active {
    background: #d2d0ce;
}

.gallery {
    display: grid;
    grid-template-columns: repeat(6, 23px);
    gap: 12px;
    padding: 16px 12px 13px;
    border-bottom: 1px solid #d8d6d4;
}

.gallery button {
    width: 23px;
    height: 23px;
}

.gallery svg {
    overflow: visible;
}

.w {
    fill: #fff;
}

.b {
    fill: #7ab8f0;
}

.g {
    fill: #c0bebc;
}

.ol {
    stroke: #666;
    stroke-width: 1.4;
}

.ol .b,
.bl {
    fill: #7ab8f0;
    stroke: #2b74ad;
    stroke-width: 1.5;
}

.ax {
    fill: none;
    stroke: #3b3a39;
    stroke-width: 1.7;
}

.card-num {
    fill: #3a8fc0;
    font-size: 10px;
    text-anchor: middle;
}

.letter {
    fill: #2f80ab;
    font-size: 19px;
    font-weight: 600;
    text-anchor: middle;
}

.wells {
    padding: 12px 8px 0 4px;
}

.well-name {
    padding-left: 10px;
}

.drill {
    margin-top: 12px;
    margin-bottom: 4px;
    font-weight: 500;
}

.well {
    margin-top: 5px;
    padding: 6px 10px;
    border: 1px dashed #b8b6b4;
    border-radius: 2px;
    background: #fff;
    white-space: nowrap;
}

.well-values {
    margin-top: 7px;
    padding: 7px 12px;
}

.switch-row {
    display: flex;
    align-items: center;
    justify-content: space-between;
    height: 34px;
    padding-left: 10px;
}

.switch {
    display: flex;
    align-items: center;
    gap: 3px;
    width: 40px;
    height: 20px;
    padding-left: 6px;
    border: 1px solid #605e5c;
    border-radius: 10px;
    background: #fff;
    font-size: 11px;
}

.switch-on {
    background: #605e5c;
    color: #fff;
}

.switch input {
    width: 10px;
    height: 10px;
    border-radius: 50%;
    background: #605e5c;
    appearance: none;
}

.switch-on input {
    background: #fff;
}

.fields {
    grid-area: 1 / 5 / 3 / 6;
    border-left: 1px solid #d8d6d4;
}

.fields .pane-head {
    padding: 0 8px 0 10px;
}

.search-fields {
    gap: 8px;
    height: 33px;
    margin: 8px 3px 0 5px;
    padding-left: 9px;
    border-color: #605e5c;
    font-size: 16px;
}

.table-name {
    display: flex;
    align-items: center;
    height: 30px;
    margin-top: 11px;
    padding-left: 9px;
}

.table-icon {
    width: 18px;
    height: 16px;
    margin: 0 7px 0 4px;
}

.field-list li {
    display: flex;
    height: 30px;
    padding-left: 48px;
}

.field-list label {
    display: flex;
    align-items: center;
}

.field-list input {
    width: 15px;
    height: 15px;
    margin-right: 7px;
    border-radius: 2px;
    background: #f8f8f7;
}

.sum {
    width: 20px;
    height: 18px;
    margin-right: 5px;
}

.calendar {
    height: 20px;
}

.expand {
    width: 8px;
    margin: 0 9px 0 -17px;
}

.expand svg {
    width: 8px;
    height: 14px;
}
```
